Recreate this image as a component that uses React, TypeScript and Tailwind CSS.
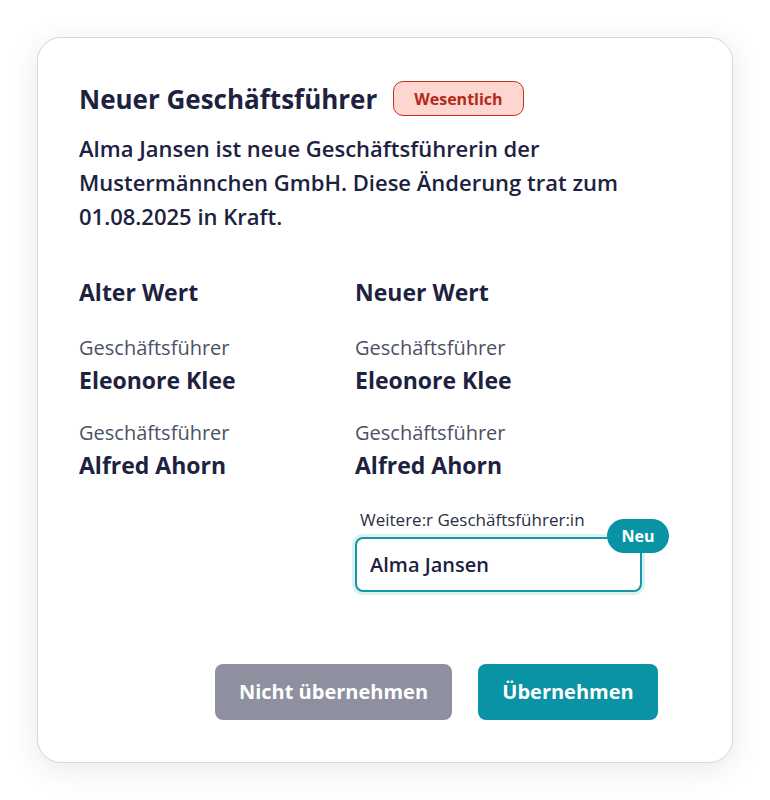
import React from "react";

const font = { fontFamily: "'Open Sans', Lato, sans-serif" };

const ValueItem = ({
  label,
  value,
  className = "mt-[26px]",
}: {
  label: string;
  value: string;
  className?: string;
}) => (
  <div className={className}>
    <div className="text-[20px] leading-[24px] text-[#4d5166]">{label}</div>
    <div className="mt-[5px] text-[23px] leading-[30px] font-bold text-[#1d2240]">
      {value}
    </div>
  </div>
);

const App: React.FC = () => {
  return (
    <div className="min-h-screen bg-white pl-[37px] pt-[37px]" style={font}>
      <div className="w-[696px] h-[726px] rounded-[24px] border border-[#d4d7e5] bg-white shadow-[0_6px_30px_rgba(30,35,64,0.10)] px-[41px] pt-[43px]">
        <div className="flex items-center gap-4">
          <h2 className="text-[26px] leading-[32px] font-bold text-[#1d2240]">
            Neuer Geschäftsführer
          </h2>
          <span className="h-[35px] px-[20px] flex items-center rounded-[10px] border-[1.5px] border-[#c2321f] bg-[#fdd6cf] text-[16px] font-bold text-[#b22a1a]">
            Wesentlich
          </span>
        </div>

        <p className="mt-[15px] w-[612px] text-[22px] leading-[34px] font-semibold text-[#1d2240]">
          Alma Jansen ist neue Geschäftsführerin der Mustermännchen GmbH. Diese
          Änderung trat zum 01.08.2025 in Kraft.
        </p>

        <div className="mt-[44px] grid grid-cols-[276px_1fr]">
          <div>
            <h3 className="text-[23px] leading-[30px] font-bold text-[#1d2240]">
              Alter Wert
            </h3>
            <ValueItem className="mt-[29px]" label="Geschäftsführer" value="Eleonore Klee" />
            <ValueItem label="Geschäftsführer" value="Alfred Ahorn" />
          </div>
          <div>
            <h3 className="text-[23px] leading-[30px] font-bold text-[#1d2240]">
              Neuer Wert
            </h3>
            <ValueItem className="mt-[29px]" label="Geschäftsführer" value="Eleonore Klee" />
            <ValueItem label="Geschäftsführer" value="Alfred Ahorn" />

            <div className="mt-[29px] pl-[5px] text-[17px] leading-[22px] text-[#2a2e45]">
              Weitere:r Geschäftsführer:in
            </div>
            <div className="relative mt-[6px] w-[287px]">
              <input
                readOnly
                value="Alma Jansen"
                className="block w-full h-[55px] rounded-[8px] border-2 border-[#1597a8] bg-white px-[13px] text-[20px] font-semibold text-[#1d2240] outline-none shadow-[0_0_0_3px_rgba(21,151,168,0.15)]"
                style={font}
              />
              <span className="absolute left-[252px] top-[-18px] h-[34px] w-[62px] flex items-center justify-center rounded-full bg-[#0a93a4] text-[16px] font-bold text-white">
                Neu
              </span>
            </div>
          </div>
        </div>

        <div className="mt-[72px] flex justify-end gap-[26px] pr-[33px]">
          <button className="h-[56px] w-[237px] rounded-[8px] bg-[#8e909f] text-[20px] font-bold text-white">
            Nicht übernehmen
          </button>
          <button className="h-[56px] w-[180px] rounded-[8px] bg-[#0a93a4] text-[20px] font-bold text-white">
            Übernehmen
          </button>
        </div>
      </div>
    </div>
  );
};

export default App;
